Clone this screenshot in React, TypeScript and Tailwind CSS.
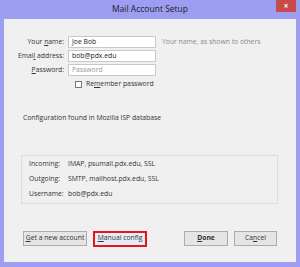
import React from 'react'

const font = { fontFamily: '"Open Sans", "Liberation Sans", sans-serif' }

export default function App() {
  const labelClass = 'w-[64px] text-right text-[6.8px] text-[#333] pr-[4px] leading-none whitespace-nowrap'
  const inputClass = 'w-[88px] h-[12px] border border-[#c8c8c8] bg-white px-[3px] text-[6.8px] text-[#222] flex items-center leading-none'
  const btnClass = 'h-[15px] border border-[#acacac] bg-[#e5e5e5] text-[6.8px] text-[#333] leading-none whitespace-nowrap'

  return (
    <div className="w-[300px] h-[267px] bg-[#9d9df2] flex flex-col px-[4px] pb-[5px]" style={font}>
      {/* Title bar */}
      <div className="h-[19px] relative flex items-center justify-center shrink-0">
        <span className="text-[8.5px] text-[#222] leading-none">Mail Account Setup</span>
        <div className="absolute right-[0px] top-0 w-[20px] h-[12px] bg-[#c84b4b] flex items-center justify-center">
          <span className="text-white text-[8px] font-bold leading-none">×</span>
        </div>
      </div>

      {/* Content */}
      <div className="flex-1 bg-[#f0f0f0] flex flex-col">
        <div className="mt-[17px] flex flex-col gap-[2px]">
          <div className="flex items-center">
            <label className={labelClass}>Your <u>n</u>ame:</label>
            <div className={inputClass}>Joe Bob</div>
            <span className="ml-[6px] text-[6.8px] text-[#8a8a8a] leading-none whitespace-nowrap">Your name, as shown to others</span>
          </div>
          <div className="flex items-center">
            <label className={labelClass}>Emai<u>l</u> address:</label>
            <div className={inputClass}>bob@pdx.edu</div>
          </div>
          <div className="flex items-center">
            <label className={labelClass}><u>P</u>assword:</label>
            <div className={`${inputClass} text-[#999]`}>Password</div>
          </div>
          <div className="flex items-center mt-[3px] pl-[71px]">
            <div className="w-[7px] h-[7px] border border-[#777] bg-white" />
            <span className="ml-[4px] text-[6.8px] text-[#333] leading-none">Re<u>m</u>ember password</span>
          </div>
        </div>

        <p className="mt-[27px] ml-[19px] text-[6.8px] text-[#333] leading-none">Configuration found in Mozilla ISP database</p>

        <div className="mt-[33px] ml-[17px] w-[257px] h-[49px] border border-[#dcdcdc] flex flex-col justify-center gap-[8px] pl-[7px] text-[6.8px] text-[#333] leading-none">
          <div className="flex"><span className="w-[39px] whitespace-nowrap">Incoming:</span><span>IMAP, psumail.pdx.edu, SSL</span></div>
          <div className="flex"><span className="w-[39px] whitespace-nowrap">Outgoing:</span><span>SMTP, mailhost.pdx.edu, SSL</span></div>
          <div className="flex"><span className="w-[39px] whitespace-nowrap">Username:</span><span>bob@pdx.edu</span></div>
        </div>

        <div className="mt-[27px] flex items-center px-[19px]">
          <button className={`${btnClass} w-[64px]`}>
            <u>G</u>et a new account
          </button>
          <button className="ml-[6px] w-[54px] h-[16px] border-2 border-[#e8141c] bg-[#e5eef8] text-[6.8px] text-[#333] leading-none whitespace-nowrap">
            <u>M</u>anual config
          </button>
          <button className={`${btnClass} ml-auto w-[44px] font-bold text-[#222]`}>
            <u>D</u>one
          </button>
          <button className={`${btnClass} ml-[6px] w-[43px]`}>
            Ca<u>n</u>cel
          </button>
        </div>
      </div>
    </div>
  )
}
